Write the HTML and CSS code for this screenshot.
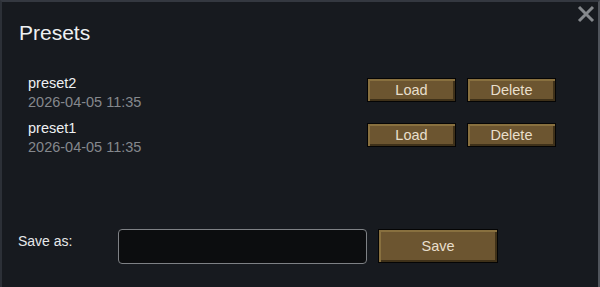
FILE: index.html
```html
<!DOCTYPE html>
<html>
<head>
<meta charset="utf-8">
<link rel="stylesheet" href="styles.css">
</head>
<body>
<div class="panel">
  <svg class="close" width="20" height="20" viewBox="0 0 20 20"><path d="M3 3 L17 17 M17 3 L3 17" stroke="#85888c" stroke-width="3" fill="none"/></svg>
  <h1 class="title">Presets</h1>
  <div class="list">
    <div class="preset">
      <div class="info">
        <div class="name">preset2</div>
        <div class="date">2026-04-05 11:35</div>
      </div>
      <div class="actions">
        <button class="btn">Load</button>
        <button class="btn">Delete</button>
      </div>
    </div>
    <div class="preset">
      <div class="info">
        <div class="name">preset1</div>
        <div class="date">2026-04-05 11:35</div>
      </div>
      <div class="actions">
        <button class="btn">Load</button>
        <button class="btn">Delete</button>
      </div>
    </div>
  </div>
  <div class="save-row">
    <label class="save-label">Save as:</label>
    <input class="save-input" type="text">
    <button class="btn btn-save">Save</button>
  </div>
</div>
</body>
</html>
```
FILE: styles.css
```css
html, body {
  margin: 0;
  padding: 0;
  background: #171a1f;
}
.panel {
  position: relative;
  box-sizing: border-box;
  width: 600px;
  height: 287px;
  background: #171a1f;
  border-top: 2px solid #343840;
  border-left: 2px solid #2c3037;
  border-right: 2px solid #50545b;
  padding: 19px 0 23px 0;
  display: flex;
  flex-direction: column;
  font-family: "Liberation Sans", Arial, sans-serif;
  color: #eceef0;
}
.close {
  position: absolute;
  top: 2px;
  right: 2px;
}
.title {
  margin: 0 0 29px 17px;
  font-size: 21px;
  line-height: 24px;
  font-weight: normal;
  color: #eef0f2;
}
.list {
  display: flex;
  flex-direction: column;
  gap: 7px;
}
.preset {
  display: flex;
  align-items: flex-start;
  width: 554px;
  padding-left: 26px;
  box-sizing: border-box;
}
.info {
  flex: 1;
  font-size: 14.5px;
  line-height: 19px;
}
.name {
  color: #eef0f2;
}
.date {
  color: #85888d;
}
.actions {
  display: flex;
  gap: 11px;
  margin-top: 4px;
}
.btn {
  box-sizing: border-box;
  width: 89px;
  height: 24px;
  padding: 0;
  background: #6c5530;
  border: 1px solid #050505;
  box-shadow: inset 2px 2px 0 #88703f, inset -2px -2px 0 #3f3119;
  color: #e8dfcc;
  font-family: "Liberation Sans", Arial, sans-serif;
  font-size: 14.5px;
  line-height: 20px;
}
.save-row {
  margin-top: auto;
  display: flex;
  align-items: flex-start;
  padding-left: 16px;
}
.save-label {
  width: 100px;
  padding-top: 3px;
  font-size: 14px;
  line-height: 19px;
  color: #e6e8ea;
}
.save-input {
  box-sizing: border-box;
  width: 249px;
  height: 35px;
  margin: 0;
  background: #0c0d0f;
  border: 1px solid #7e8185;
  border-radius: 4px;
  outline: none;
}
.btn-save {
  width: 120px;
  height: 34px;
  margin-left: 11px;
  font-size: 14.5px;
}
```
